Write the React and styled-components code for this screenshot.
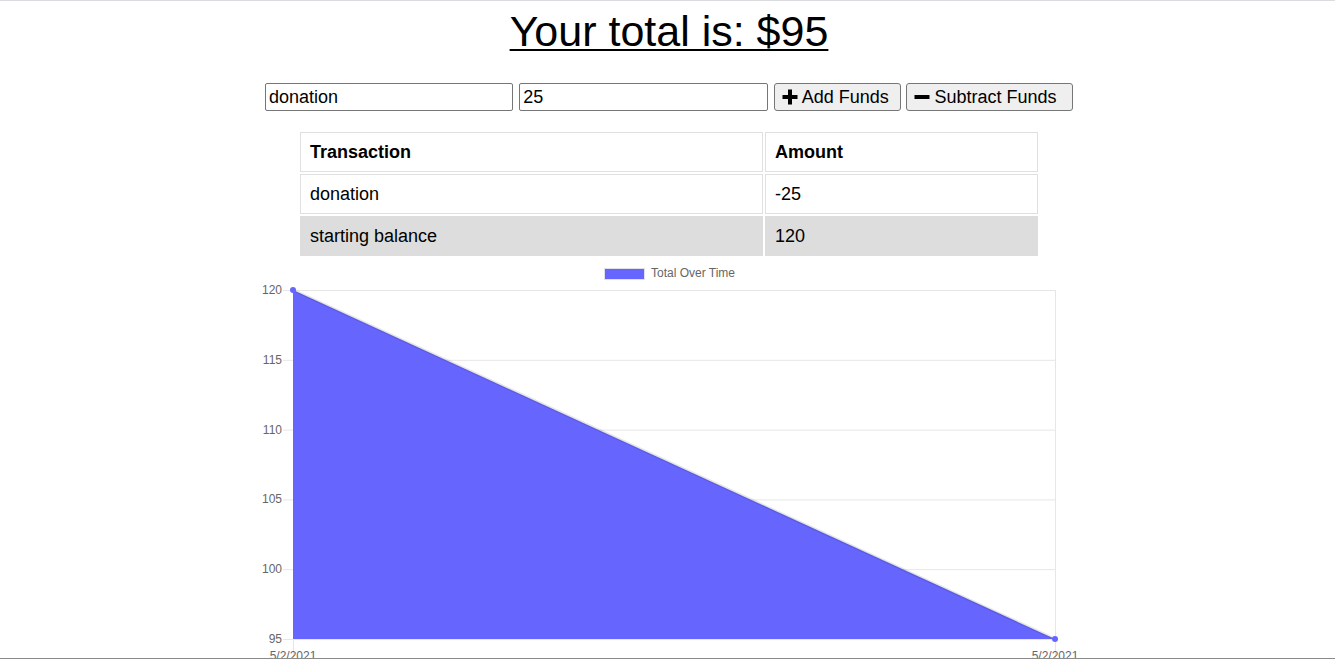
import React, { useState } from 'react';
import styled, { createGlobalStyle } from 'styled-components';

const GlobalStyle = createGlobalStyle`
    html, body {
        margin: 0;
        padding: 0;
        overflow: hidden;
        background: #fff;
        font-family: Arial, "Liberation Sans", sans-serif;
        color: #000;
    }
    body {
        border-top: 1px solid #dadce0;
    }
`;

const Page = styled.div`
    width: 808px;
    padding-left: 3px;
    margin: 0 auto;
`;

const Title = styled.h1`
    margin: 6px 0 0;
    font-size: 43px;
    font-weight: normal;
    line-height: 49px;
    text-align: center;
    text-decoration: underline;
    text-decoration-thickness: 2px;
    text-underline-offset: 3px;
`;

const Form = styled.div`
    display: flex;
    gap: 5px;
    margin-top: 27px;
    height: 28px;
`;

const Input = styled.input`
    box-sizing: border-box;
    width: 249px;
    height: 28px;
    border: 1px solid #767676;
    border-radius: 2px;
    padding: 1px 3px;
    font-family: Arial, "Liberation Sans", sans-serif;
    font-size: 18px;
    color: #000;
    outline: none;
`;

const Button = styled.button`
    box-sizing: border-box;
    width: ${p => p.$w}px;
    margin-left: ${p => p.$ml || 0}px;
    height: 28px;
    display: flex;
    align-items: center;
    gap: 4px;
    padding: 0 6px 0 7px;
    background: #efefef;
    border: 1px solid #767676;
    border-radius: 3px;
    font-family: Arial, "Liberation Sans", sans-serif;
    font-size: 18px;
    color: #000;
    white-space: nowrap;
`;

const Table = styled.table`
    margin: 19px auto 0;
    width: 742px;
    border-spacing: 2px;
    font-size: 18px;
`;

const Cell = styled.td`
    box-sizing: border-box;
    height: 40px;
    border: 1px solid #e0e0e0;
    padding: 0 9px;
    text-align: left;
    width: ${p => p.$w || 'auto'};
    font-weight: ${p => (p.$head ? 'bold' : 'normal')};
    background: ${p => (p.$shade ? '#dddddd' : '#fff')};
    border-color: ${p => (p.$shade ? '#dddddd' : '#e0e0e0')};
`;

const ChartWrap = styled.div`
    margin: 0 0 0 -15px;
    width: 838px;
`;

const BottomEdge = styled.div`
    position: fixed;
    left: 0;
    right: 0;
    bottom: 0;
    height: 1px;
    background: #8a8a8a;
`;

const PlusIcon = () => (
    <svg width="16" height="16" viewBox="0 0 16 16">
        <rect x="6" y="0.5" width="4" height="15" fill="#000" />
        <rect x="0.5" y="6" width="15" height="4" fill="#000" />
    </svg>
);

const MinusIcon = () => (
    <svg width="16" height="16" viewBox="0 0 16 16">
        <rect x="0.5" y="6" width="15" height="4" fill="#000" />
    </svg>
);

const Chart = () => {
    const left = 43;
    const right = 805;
    const top = 32;
    const bottom = 381;
    const ticks = [120, 115, 110, 105, 100, 95];
    const yOf = v => top + ((120 - v) / 25) * (bottom - top);
    return (
        <svg width="838" height="410" style={{ display: 'block' }} fontFamily="Arial, 'Liberation Sans', sans-serif">
            <rect x="354.5" y="10.5" width="40" height="11" fill="#6666ff" stroke="#e0e0e8" strokeWidth="1" />
            <text x="401" y="19" fontSize="12" fill="#666">Total Over Time</text>
            {ticks.map(v => (
                <g key={v}>
                    <line x1={left - 10} x2={right} y1={yOf(v) + 0.5} y2={yOf(v) + 0.5} stroke="#e6e6e6" />
                    <text x={left - 11} y={yOf(v) + 4} fontSize="12" fill="#666" textAnchor="end">{v}</text>
                </g>
            ))}
            <line x1={left + 0.5} x2={left + 0.5} y1={top} y2={bottom + 20} stroke="#e6e6e6" />
            <line x1={right + 0.5} x2={right + 0.5} y1={top} y2={bottom + 20} stroke="#e6e6e6" />
            <polygon points={`${left},${yOf(120)} ${right},${yOf(95)} ${left},${yOf(95)}`} fill="#6666ff" />
            <line x1={left} y1={yOf(120)} x2={right} y2={yOf(95)} stroke="rgba(0,0,0,0.1)" strokeWidth="3" />
            <circle cx={left} cy={yOf(120)} r="3" fill="#6666ff" />
            <circle cx={right} cy={yOf(95)} r="3" fill="#6666ff" />
            <text x={left} y={bottom + 21} fontSize="12" fill="#666" textAnchor="middle">5/2/2021</text>
            <text x={right} y={bottom + 21} fontSize="12" fill="#666" textAnchor="middle">5/2/2021</text>
        </svg>
    );
};

const App = () => {
    const [name, setName] = useState('donation');
    const [amount, setAmount] = useState('25');
    return (
        <>
            <GlobalStyle />
            <Page>
                <Title>Your total is: $95</Title>
                <Form>
                    <Input type='text' value={name} onChange={e => setName(e.target.value)} />
                    <Input type='text' value={amount} onChange={e => setAmount(e.target.value)} style={{ marginLeft: 1 }} />
                    <Button $w={128} $ml={1}><PlusIcon />Add Funds</Button>
                    <Button $w={167}><MinusIcon />Subtract Funds</Button>
                </Form>
                <Table>
                    <thead>
                        <tr>
                            <Cell as='th' $head $w='463px'>Transaction</Cell>
                            <Cell as='th' $head>Amount</Cell>
                        </tr>
                    </thead>
                    <tbody>
                        <tr>
                            <Cell>donation</Cell>
                            <Cell>-25</Cell>
                        </tr>
                        <tr>
                            <Cell $shade>starting balance</Cell>
                            <Cell $shade>120</Cell>
                        </tr>
                    </tbody>
                </Table>
                <ChartWrap>
                    <Chart />
                </ChartWrap>
            </Page>
            <BottomEdge />
        </>
    );
};

export default App;
